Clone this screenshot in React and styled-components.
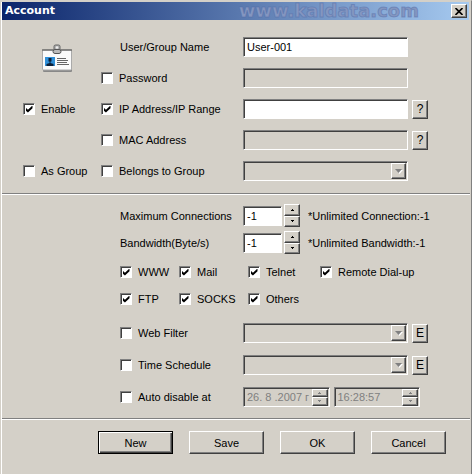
import React, { useState } from "react";
import styled, { createGlobalStyle, css } from "styled-components";

const face = "#d4d0c8";
const shade = "#808080";
const dark = "#404040";

const GlobalStyle = createGlobalStyle`
  *, *::before, *::after { box-sizing: border-box; }
  body {
    margin: 0;
    background: ${face};
    color: #000;
    font: 11px/14px "Liberation Sans", Arial, sans-serif;
  }
  button, input, select { font: inherit; color: inherit; margin: 0; border-radius: 0; }
`;

const raised = css`
  background: ${face};
  border: 1px solid;
  border-color: #fff ${dark} ${dark} #fff;
  box-shadow: inset -1px -1px 0 ${shade};
`;

const sunken = css`
  border: 1px solid;
  border-color: ${shade} #fff #fff ${shade};
  box-shadow: inset 1px 1px 0 ${dark};
`;

const Dialog = styled.main`
  min-height: 100vh;
  padding: 1px 1px 0 2px;
  border-right: 1px solid ${shade};
  border-top: 1px solid ${face};
  background: linear-gradient(#fff, #fff) 1px 1px / 1px 100% no-repeat, ${face};
`;

const TitleBar = styled.header`
  display: flex;
  align-items: center;
  height: 18px;
  margin-right: 1px;
  padding: 0 2px 0 3px;
  background: linear-gradient(90deg, #0a246a, #a6caf0);
`;

const Title = styled.h1`
  flex: 1;
  margin: 0;
  color: #fff;
  font: bold 11px/18px "DejaVu Sans", Tahoma, sans-serif;
`;

const Watermark = styled.span`
  margin-right: 32px;
  color: #8496c0;
  font: bold 18px/18px "DejaVu Sans", Verdana, sans-serif;
  -webkit-text-stroke: 1px rgba(80, 105, 165, 0.45);
`;

const CloseButton = styled.button`
  ${raised}
  display: grid;
  place-items: center;
  width: 16px;
  height: 14px;
  padding: 0;
`;

const Section = styled.section`
  display: flex;
  flex-direction: column;
  padding: ${(p) => p.$padding};
  gap: ${(p) => p.$gap || "0"};
  border-bottom: 1px solid #fff;
  box-shadow: inset 0 -1px 0 ${shade};
`;

const Stack = styled.div`
  display: grid;
  row-gap: 12px;
`;

const FieldRow = styled.div`
  display: grid;
  grid-template-columns: 78px 142px minmax(0, 1fr) 20px;
  align-items: center;
  height: 20px;
`;

const OptionRow = styled.div`
  display: grid;
  grid-template-columns: 123px minmax(0, 1fr) 20px;
  align-items: center;
  height: 20px;
`;

const Cell = styled.div`
  grid-column: ${(p) => p.$col};
  display: flex;
  align-items: center;
  padding-left: ${(p) => (p.$indent ? "19px" : "0")};
`;

const IconCell = styled.div`
  grid-column: 1;
  height: 20px;
  padding: 7px 0 0 18px;
`;

const CheckLabel = styled.label`
  display: flex;
  align-items: center;
  gap: 6px;
  white-space: nowrap;
`;

const CheckBox = styled.input`
  ${sunken}
  appearance: none;
  flex: none;
  display: grid;
  place-items: center;
  width: 12px;
  height: 12px;
  background: #fff;
  &:checked::before {
    content: "";
    width: 7px;
    height: 7px;
    background: #000;
    clip-path: polygon(0 29%, 35% 62%, 100% 0, 100% 40%, 35% 100%, 0 70%);
  }
`;

const TextField = styled.input`
  ${sunken}
  grid-column: ${(p) => p.$col};
  width: 100%;
  min-width: 0;
  height: 20px;
  padding: 0 3px;
  background: #fff;
  outline: none;
  &:disabled { background: ${face}; color: ${shade}; }
`;

const SmallButton = styled.button`
  ${raised}
  justify-self: end;
  width: 16px;
  height: 19px;
  padding: 0;
  font-size: 12px;
`;

const ComboFrame = styled.div`
  ${sunken}
  grid-column: ${(p) => p.$col};
  display: flex;
  height: 20px;
  padding: 1px;
  position: relative;
`;

const ComboSelect = styled.select`
  appearance: none;
  width: 100%;
  padding: 0 18px 0 3px;
  border: 0;
  background: ${face};
  opacity: 1;
`;

const ComboArrow = styled.span`
  ${raised}
  position: absolute;
  inset: 1px 1px 1px auto;
  display: grid;
  place-items: center;
  width: 15px;
  pointer-events: none;
`;

const SpinRow = styled.div`
  display: grid;
  grid-template-columns: 123px 39px 17px 1fr;
  align-items: center;
  height: 27px;
`;

const Stepper = styled.div`
  display: grid;
  flex: none;
  grid-template-rows: 1fr 1fr;
  width: 16px;
  height: ${(p) => (p.$inner ? "17px" : "23px")};
  margin-left: ${(p) => (p.$inner ? "0" : "2px")};
`;

const StepButton = styled.button`
  ${raised}
  display: grid;
  place-items: center;
  min-height: 0;
  padding: 0;
  line-height: 0;
  color: ${(p) => (p.disabled ? shade : "#000")};
`;

const Note = styled.span`
  padding-left: 9px;
  white-space: nowrap;
`;

const Services = styled.div`
  display: grid;
  grid-template-columns: 59px 69px 72px 1fr;
  row-gap: 13px;
  padding: 9px 0 17px;
`;

const DateRow = styled.div`
  display: grid;
  grid-template-columns: 123px minmax(0, 1fr) minmax(0, 1fr);
  align-items: center;
  height: 20px;
  padding-right: 4px;
`;

const DateFrame = styled.div`
  ${sunken}
  display: flex;
  align-items: center;
  height: 20px;
  padding: 1px;
  margin-right: 4px;
`;

const DateInput = styled.input`
  flex: 1;
  min-width: 0;
  height: 16px;
  padding: 0 0 0 2px;
  border: 0;
  background: ${face};
  &:disabled { color: ${shade}; }
`;

const Footer = styled.footer`
  display: flex;
  gap: 16px;
  padding: 11px 20px 20px 96px;
`;

const PushButton = styled.button`
  ${raised}
  flex: 0 1 75px;
  height: 23px;
  padding: 0;
  ${(p) => p.$primary && css`
    border-color: #000;
    box-shadow: inset 1px 1px 0 #fff, inset -1px -1px 0 ${dark}, inset -2px -2px 0 ${shade};
  `}
`;

function Check({ label, on = false }) {
  const [checked, setChecked] = useState(on);
  return (
    <CheckLabel>
      <CheckBox type="checkbox" checked={checked} onChange={(e) => setChecked(e.target.checked)} />
      {label}
    </CheckLabel>
  );
}

function Combo({ label, col }) {
  return (
    <ComboFrame $col={col}>
      <ComboSelect aria-label={label} disabled />
      <ComboArrow>
        <svg width="9" height="6" viewBox="0 0 9 6">
          <path d="M2 2h7L5.5 6z" fill="#fff" />
          <path d="M1 1h7L4.500 5z" fill={shade} />
        </svg>
      </ComboArrow>
    </ComboFrame>
  );
}

function Steps({ label, inner, disabled, onStep }) {
  const step = (n) => () => onStep && onStep(n);
  return (
    <Stepper $inner={inner}>
      <StepButton type="button" aria-label={`Increase ${label}`} disabled={disabled} onClick={step(1)}>
        <svg width="5" height="3" viewBox="0 0 5 3"><path d="M1 3h3V2H3V1H2v1H1z" fill="currentColor" /></svg>
      </StepButton>
      <StepButton type="button" aria-label={`Decrease ${label}`} disabled={disabled} onClick={step(-1)}>
        <svg width="5" height="3" viewBox="0 0 5 3"><path d="M1 0h3v1H3v1H2V1H1z" fill="currentColor" /></svg>
      </StepButton>
    </Stepper>
  );
}

function SpinField({ id, label, note }) {
  const [value, setValue] = useState("-1");
  return (
    <SpinRow>
      <label htmlFor={id}>{label}</label>
      <TextField id={id} $col={2} value={value} onChange={(e) => setValue(e.target.value)} />
      <Steps label={label} onStep={(n) => setValue(String(Number(value) + n))} />
      <Note>{note}</Note>
    </SpinRow>
  );
}

function BadgeIcon() {
  return (
    <svg width="34" height="30" viewBox="0 0 34 30" aria-hidden="true">
      <rect x="2" y="7" width="29" height="21" rx="1" fill="#888" />
      <rect x="1.500" y="6" width="29" height="20" rx="1" fill="#fafafa" stroke="#aaa" />
      <path d="M1 6h30" stroke="#444" />
      <path d="M13 5V2.500Q13 1 14.500 1h3Q19 1 19 2.500V5" fill="#aaa" stroke="#666" />
      <rect x="12" y="5.500" width="8" height="4" rx="2" fill="#bbb" stroke="#555" />
      <circle cx="16" cy="3.500" r="1.300" fill="#eee" />
      <rect x="4" y="13" width="10" height="9" fill="#2f8fd8" />
      <path d="M7.500 14h3v3.500h-1v1.500l3 1v2h-7v-2l3-1v-1.500h-1z" fill="#0b2038" />
      <path d="M16 14.500h9M16 16.500h11M16 18.500h10M16 20.500h12" stroke="#666" />
    </svg>
  );
}

export default function App() {
  const [name, setName] = useState("User-001");
  const [ip, setIp] = useState("");
  return (
    <>
      <GlobalStyle />
      <Dialog>
        <TitleBar>
          <Title>Account</Title>
          <Watermark>www.kaldata.com</Watermark>
          <CloseButton type="button" aria-label="Close">
            <svg width="8" height="7" viewBox="0 0 8 7">
              <path d="M0.500 0l7 7M7.500 0l-7 7" stroke="#000" strokeWidth="1.600" />
            </svg>
          </CloseButton>
        </TitleBar>

        <Section $padding="17px 42px 13px 21px" $gap="11px">
          <FieldRow>
            <IconCell><BadgeIcon /></IconCell>
            <Cell $col={2} $indent><label htmlFor="name">User/Group Name</label></Cell>
            <TextField id="name" $col={3} value={name} onChange={(e) => setName(e.target.value)} />
          </FieldRow>
          <FieldRow>
            <Cell $col={2}><Check label="Password" /></Cell>
            <TextField $col={3} aria-label="Password" disabled />
          </FieldRow>
          <FieldRow>
            <Cell $col={1}><Check label="Enable" on /></Cell>
            <Cell $col={2}><Check label="IP Address/IP Range" on /></Cell>
            <TextField $col={3} aria-label="IP Address/IP Range" value={ip} onChange={(e) => setIp(e.target.value)} />
            <SmallButton type="button">?</SmallButton>
          </FieldRow>
          <FieldRow>
            <Cell $col={2}><Check label="MAC Address" /></Cell>
            <TextField $col={3} aria-label="MAC Address" disabled />
            <SmallButton type="button">?</SmallButton>
          </FieldRow>
          <FieldRow>
            <Cell $col={1}><Check label="As Group" /></Cell>
            <Cell $col={2}><Check label="Belongs to Group" /></Cell>
            <Combo col={3} label="Belongs to Group" />
          </FieldRow>
        </Section>

        <Section $padding="7px 42px 12px 118px">
          <SpinField id="connections" label="Maximum Connections" note="*Unlimited Connection:-1" />
          <SpinField id="bandwidth" label="Bandwidth(Byte/s)" note="*Unlimited Bandwidth:-1" />
          <Services>
            <Check label="WWW" on />
            <Check label="Mail" on />
            <Check label="Telnet" on />
            <Check label="Remote Dial-up" on />
            <Check label="FTP" on />
            <Check label="SOCKS" on />
            <Check label="Others" on />
          </Services>
          <Stack>
            <OptionRow>
              <Check label="Web Filter" />
              <Combo col={2} label="Web Filter" />
              <SmallButton type="button">E</SmallButton>
            </OptionRow>
            <OptionRow>
              <Check label="Time Schedule" />
              <Combo col={2} label="Time Schedule" />
              <SmallButton type="button">E</SmallButton>
            </OptionRow>
            <DateRow>
              <Check label="Auto disable at" />
              <DateFrame>
                <DateInput aria-label="Date" defaultValue="26. 8 .2007 г" disabled />
                <Steps label="date" inner disabled />
              </DateFrame>
              <DateFrame>
                <DateInput aria-label="Time" defaultValue="16:28:57" disabled />
                <Steps label="time" inner disabled />
              </DateFrame>
            </DateRow>
          </Stack>
        </Section>

        <Footer>
          <PushButton type="button" $primary>New</PushButton>
          <PushButton type="button">Save</PushButton>
          <PushButton type="button">OK</PushButton>
          <PushButton type="button">Cancel</PushButton>
        </Footer>
      </Dialog>
    </>
  );
}
